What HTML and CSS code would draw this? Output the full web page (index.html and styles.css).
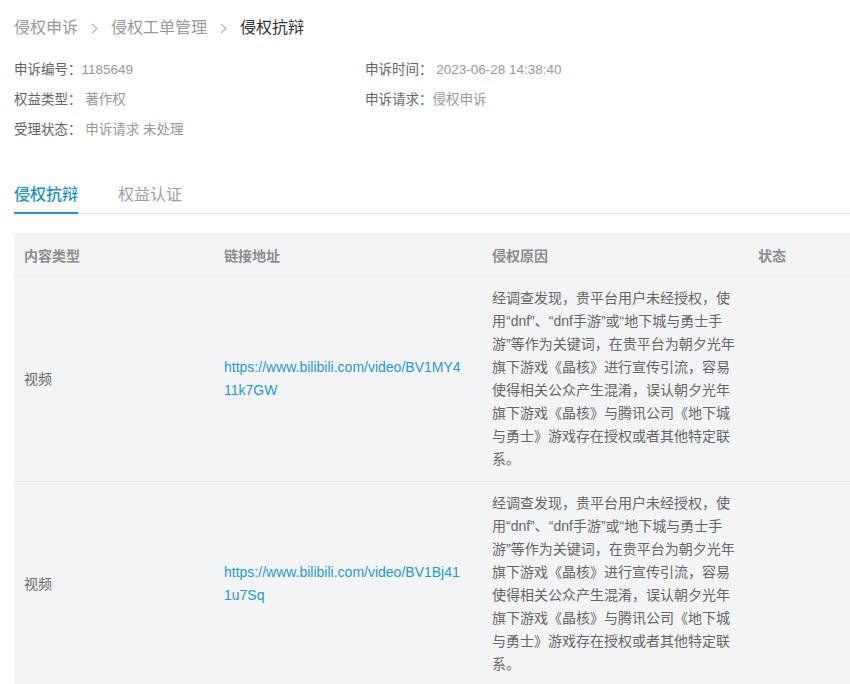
FILE: index.html
```html
<!DOCTYPE html>
<html lang="zh-CN">
<head>
<meta charset="utf-8">
<title>侵权抗辩</title>
<link rel="stylesheet" href="styles.css">
</head>
<body>
<div class="page">
  <nav class="crumbs">
    <span class="crumb">侵权申诉</span>
    <svg class="sep" width="7" height="11" viewBox="0 0 7 11"><polyline points="1,1 6,5.5 1,10" fill="none" stroke="#b5b5b5" stroke-width="1.1"/></svg>
    <span class="crumb">侵权工单管理</span>
    <svg class="sep" width="7" height="11" viewBox="0 0 7 11"><polyline points="1,1 6,5.5 1,10" fill="none" stroke="#b5b5b5" stroke-width="1.1"/></svg>
    <span class="crumb current">侵权抗辩</span>
  </nav>

  <div class="info">
    <div class="item"><span class="label">申诉编号：</span><span class="value">1185649</span></div>
    <div class="item"><span class="label">申诉时间：</span> <span class="value">2023-06-28 14:38:40</span></div>
    <div class="item"><span class="label">权益类型：</span> <span class="value">著作权</span></div>
    <div class="item"><span class="label">申诉请求：</span><span class="value">侵权申诉</span></div>
    <div class="item"><span class="label">受理状态：</span> <span class="value">申诉请求 未处理</span></div>
  </div>

  <div class="tabs">
    <div class="tab active">侵权抗辩</div>
    <div class="tab">权益认证</div>
  </div>

  <table class="grid">
    <colgroup>
      <col class="c1"><col class="c2"><col class="c3"><col class="c4">
    </colgroup>
    <thead>
      <tr><th>内容类型</th><th>链接地址</th><th>侵权原因</th><th>状态</th></tr>
    </thead>
    <tbody>
      <tr>
        <td>视频</td>
        <td class="link-cell"><a class="link" href="#">https://www.bilibili.com/video/BV1MY411k7GW</a></td>
        <td class="reason">经调查发现，贵平台用户未经授权，使用“dnf”、“dnf手游”或“地下城与勇士手游”等作为关键词，在贵平台为朝夕光年旗下游戏《晶核》进行宣传引流，容易使得相关公众产生混淆，误认朝夕光年旗下游戏《晶核》与腾讯公司《地下城与勇士》游戏存在授权或者其他特定联系。</td>
        <td></td>
      </tr>
      <tr>
        <td>视频</td>
        <td class="link-cell"><a class="link" href="#">https://www.bilibili.com/video/BV1Bj411u7Sq</a></td>
        <td class="reason">经调查发现，贵平台用户未经授权，使用“dnf”、“dnf手游”或“地下城与勇士手游”等作为关键词，在贵平台为朝夕光年旗下游戏《晶核》进行宣传引流，容易使得相关公众产生混淆，误认朝夕光年旗下游戏《晶核》与腾讯公司《地下城与勇士》游戏存在授权或者其他特定联系。</td>
        <td></td>
      </tr>
    </tbody>
  </table>
</div>
</body>
</html>
```

FILE: styles.css
```css
html, body {
  margin: 0;
  padding: 0;
  background: #fff;
}
body {
  font-family: "Liberation Sans", "Noto Sans CJK SC", sans-serif;
  color: #666;
  overflow: hidden;
}
.page {
  padding-left: 14px;
  width: 836px;
}
.crumbs {
  display: flex;
  align-items: center;
  padding-top: 16px;
  height: 24px;
  font-size: 16px;
  line-height: 24px;
}
.crumb {
  color: #999;
}
.crumb.current {
  color: #333;
}
.sep {
  margin: 0 13px 0 13px;
  display: block;
}
.info {
  margin-top: 15px;
  display: grid;
  grid-template-columns: 351px 1fr;
  grid-auto-rows: 30px;
  font-size: 13.5px;
  line-height: 30px;
}
.label {
  color: #666;
}
.value {
  color: #999;
}
.tabs {
  margin-top: 38px;
  display: flex;
  gap: 40px;
  border-bottom: 1px solid #e6e8eb;
}
.tab {
  font-size: 16px;
  line-height: 24px;
  padding-bottom: 5px;
  border-bottom: 2px solid transparent;
  margin-bottom: -1px;
  color: #a0a0a0;
}
.tab.active {
  color: #1d93c4;
  border-bottom-color: #2494c2;
  font-weight: 500;
}
.grid {
  margin-top: 19px;
  width: 836px;
  table-layout: fixed;
  border-collapse: collapse;
  background: #f3f4f6;
  font-size: 14px;
}
.c1 { width: 200px; }
.c2 { width: 268px; }
.c3 { width: 266px; }
.c4 { width: 102px; }
.grid th {
  height: 43px;
  padding: 0 10px;
  text-align: left;
  color: #8c8c8c;
  font-weight: bold;
  border-bottom: 1px solid #e8e9ec;
}
.grid td {
  padding: 10px 10px;
  line-height: 23px;
  vertical-align: middle;
  color: #666;
  border-bottom: 1px solid #e8e9ec;
}
.grid td.link-cell {
  padding-right: 20px;
}
.link {
  color: #1f9bd2;
  text-decoration: none;
  word-break: break-all;
}
.reason {
  color: #666;
}
```
